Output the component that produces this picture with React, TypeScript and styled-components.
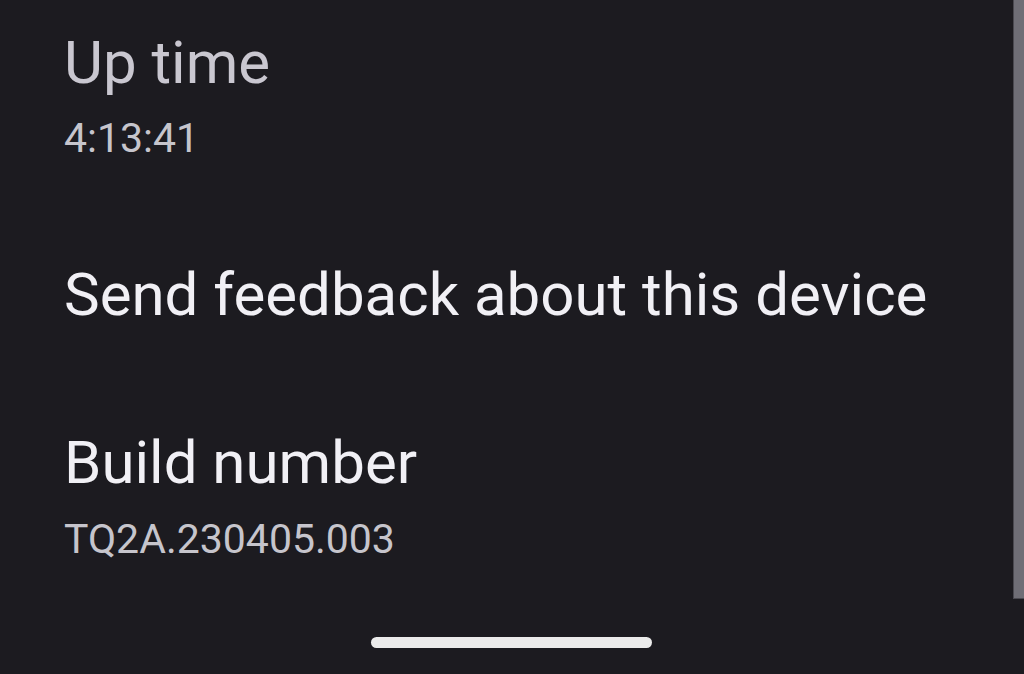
import React from "react";
import styled, { createGlobalStyle } from "styled-components";

const Global = createGlobalStyle`
  html, body { margin: 0; padding: 0; background: #1c1b20; }
  body { width: 1024px; height: 674px; overflow: hidden; font-family: Roboto, "Noto Sans", sans-serif; }
`;

const Screen = styled.div`
  position: relative;
  width: 1024px;
  height: 674px;
  background: #1c1b20;
  display: flex;
  overflow: hidden;
`;

const List = styled.div`
  flex: 1;
  display: flex;
  flex-direction: column;
  padding: 0 0 0 64px;
  margin-top: -21.5px;
`;

const Item = styled.div`
  display: flex;
  flex-direction: column;
  padding: 49px 0;
`;

const Title = styled.div<{ $dim?: boolean }>`
  font-size: 60px;
  line-height: 70px;
  color: ${(p) => (p.$dim ? "#c9c7d0" : "#f1f0f5")};
  white-space: nowrap;
`;

const Summary = styled.div`
  margin-top: 16.5px;
  font-size: 41px;
  line-height: 48px;
  color: #c6c5cc;
  white-space: nowrap;
`;

const ScrollBar = styled.div`
  position: absolute;
  top: 0;
  right: 0;
  width: 10px;
  height: 598px;
  background: #6f6e76;
  border-left: 1px solid #4a4950;
  border-bottom: 1px solid #4a4950;
`;

const HomeIndicator = styled.div`
  position: absolute;
  left: 371px;
  top: 637px;
  width: 281px;
  height: 11px;
  border-radius: 6px;
  background: #ebebeb;
`;

export default function App() {
  return (
    <Screen>
      <Global />
      <List>
        <Item>
          <Title $dim>Up time</Title>
          <Summary>4:13:41</Summary>
        </Item>
        <Item>
          <Title>Send feedback about this device</Title>
        </Item>
        <Item>
          <Title>Build number</Title>
          <Summary>TQ2A.230405.003</Summary>
        </Item>
      </List>
      <ScrollBar />
      <HomeIndicator />
    </Screen>
  );
}
